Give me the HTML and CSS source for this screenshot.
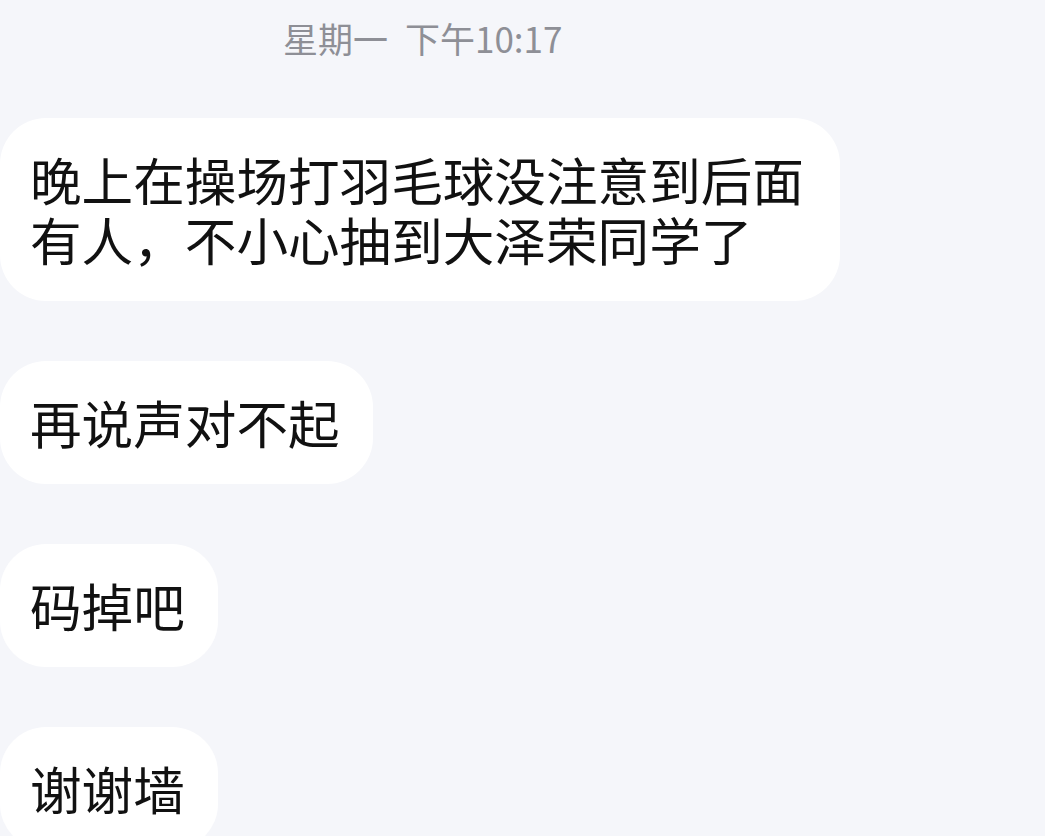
FILE: index.html
```html
<!DOCTYPE html>
<html lang="zh-CN">
<head>
<meta charset="utf-8">
<title>Chat</title>
<link rel="stylesheet" href="styles.css">
</head>
<body>
<div class="chat">
  <div class="time">星期一<span class="gap"></span>下午10:17</div>
  <div class="bubble">晚上在操场打羽毛球没注意到后面有人，不小心抽到大泽荣同学了</div>
  <div class="bubble">再说声对不起</div>
  <div class="bubble">码掉吧</div>
  <div class="bubble">谢谢墙</div>
</div>
</body>
</html>
```
FILE: styles.css
```css
html, body {
  margin: 0;
  padding: 0;
  background: #f5f6fa;
  height: 100%;
  overflow: hidden;
}
body {
  font-family: "Noto Sans CJK SC", "Noto Sans", sans-serif;
}
.chat {
  display: flex;
  flex-direction: column;
  align-items: flex-start;
  gap: 60px;
  padding-top: 18px;
}
.time {
  font-size: 35px;
  line-height: 40px;
  color: #8e8f96;
  padding-left: 283px;
  white-space: nowrap;
}
.gap {
  display: inline-block;
  width: 17px;
}
.bubble {
  box-sizing: border-box;
  max-width: 840px;
  background: #ffffff;
  border-radius: 46px;
  padding: 31px 33px 32px 30px;
  font-size: 51.6px;
  line-height: 60px;
  color: #111111;
}
```
